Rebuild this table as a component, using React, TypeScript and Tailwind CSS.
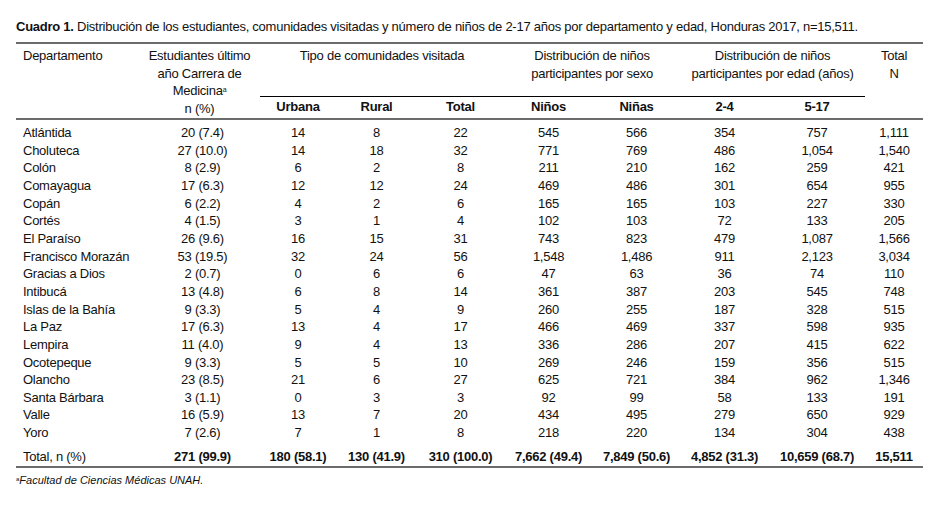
import React from 'react';

type Row = [string, string, string, string, string, string, string, string, string, string];

const rows: Row[] = [
  ['Atlántida', '20 (7.4)', '14', '8', '22', '545', '566', '354', '757', '1,111'],
  ['Choluteca', '27 (10.0)', '14', '18', '32', '771', '769', '486', '1,054', '1,540'],
  ['Colón', '8 (2.9)', '6', '2', '8', '211', '210', '162', '259', '421'],
  ['Comayagua', '17 (6.3)', '12', '12', '24', '469', '486', '301', '654', '955'],
  ['Copán', '6 (2.2)', '4', '2', '6', '165', '165', '103', '227', '330'],
  ['Cortés', '4 (1.5)', '3', '1', '4', '102', '103', '72', '133', '205'],
  ['El Paraíso', '26 (9.6)', '16', '15', '31', '743', '823', '479', '1,087', '1,566'],
  ['Francisco Morazán', '53 (19.5)', '32', '24', '56', '1,548', '1,486', '911', '2,123', '3,034'],
  ['Gracias a Dios', '2 (0.7)', '0', '6', '6', '47', '63', '36', '74', '110'],
  ['Intibucá', '13 (4.8)', '6', '8', '14', '361', '387', '203', '545', '748'],
  ['Islas de la Bahía', '9 (3.3)', '5', '4', '9', '260', '255', '187', '328', '515'],
  ['La Paz', '17 (6.3)', '13', '4', '17', '466', '469', '337', '598', '935'],
  ['Lempira', '11 (4.0)', '9', '4', '13', '336', '286', '207', '415', '622'],
  ['Ocotepeque', '9 (3.3)', '5', '5', '10', '269', '246', '159', '356', '515'],
  ['Olancho', '23 (8.5)', '21', '6', '27', '625', '721', '384', '962', '1,346'],
  ['Santa Bárbara', '3 (1.1)', '0', '3', '3', '92', '99', '58', '133', '191'],
  ['Valle', '16 (5.9)', '13', '7', '20', '434', '495', '279', '650', '929'],
  ['Yoro', '7 (2.6)', '7', '1', '8', '218', '220', '134', '304', '438'],
];

const totals: Row = ['Total, n (%)', '271 (99.9)', '180 (58.1)', '130 (41.9)', '310 (100.0)', '7,662 (49.4)', '7,849 (50.6)', '4,852 (31.3)', '10,659 (68.7)', '15,511'];

const App: React.FC = () => {
  return (
    <div className="w-[944px] h-[506px] bg-white text-[#111] font-['Liberation_Sans','Arial',sans-serif] text-[13px] tracking-[-0.25px]">
      <div className="pl-[16px] pr-[21px] pt-[20px]">
        {/* Caption */}
        <p className="leading-[14px] h-[22px] whitespace-nowrap">
          <span className="font-bold">Cuadro 1.</span> Distribución de los estudiantes, comunidades visitadas y número de niños de 2-17 años por departamento y edad, Honduras 2017, n=15,511.
        </p>

        <table className="w-[907px] table-fixed border-collapse leading-[17.65px]">
          <colgroup>
            <col className="w-[129px]" />
            <col className="w-[115px]" />
            <col className="w-[76px]" />
            <col className="w-[81px]" />
            <col className="w-[87px]" />
            <col className="w-[89px]" />
            <col className="w-[87px]" />
            <col className="w-[89px]" />
            <col className="w-[96px]" />
            <col className="w-[58px]" />
          </colgroup>
          <thead className="border-t-2 border-b-2 border-[#6b6b6b]">
            <tr className="h-[53px]">
              <th rowSpan={2} className="align-top text-left font-normal pl-[7px] pt-[3px] whitespace-nowrap">Departamento</th>
              <th rowSpan={2} className="align-top font-normal pt-[3px] pr-[6px] whitespace-nowrap">
                Estudiantes último<br />año Carrera de<br />Medicina<sup className="text-[7px]">a</sup><br />n (%)
              </th>
              <th colSpan={3} className="align-top font-normal pt-[3px] border-b border-black whitespace-nowrap">Tipo de comunidades visitada</th>
              <th colSpan={2} className="align-top font-normal pt-[3px] border-b border-black whitespace-nowrap">Distribución de niños<br />participantes por sexo</th>
              <th colSpan={2} className="align-top font-normal pt-[3px] border-b border-black whitespace-nowrap">Distribución de niños<br />participantes por edad (años)</th>
              <th rowSpan={2} className="align-top font-normal pt-[3px] whitespace-nowrap">Total<br />N</th>
            </tr>
            <tr className="h-[23px]">
              <th className="font-bold">Urbana</th>
              <th className="font-bold">Rural</th>
              <th className="font-bold">Total</th>
              <th className="font-bold">Niños</th>
              <th className="font-bold">Niñas</th>
              <th className="font-bold">2-4</th>
              <th className="font-bold">5-17</th>
            </tr>
          </thead>
          <tbody>
            {rows.map((r, i) => (
              <tr key={r[0]} className={i === 0 ? 'h-[22.65px] align-bottom' : 'h-[17.65px]'}>
                {r.map((c, j) => (
                  <td key={j} className={j === 0 ? 'text-left pl-[7px] whitespace-nowrap' : 'text-center whitespace-nowrap'}>
                    {c}
                  </td>
                ))}
              </tr>
            ))}
            <tr className="h-[25px] border-b-2 border-[#6b6b6b] align-top">
              {totals.map((c, j) => (
                <td key={j} className={j === 0 ? 'text-left pl-[7px] pt-[6px] whitespace-nowrap' : 'text-center font-bold pt-[6px] whitespace-nowrap'}>
                  {c}
                </td>
              ))}
            </tr>
          </tbody>
        </table>

        {/* Footnote */}
        <p className="mt-[5px] text-[11px] italic leading-[14px] tracking-normal">
          <sup className="text-[6px] not-italic">a</sup>Facultad de Ciencias Médicas UNAH.
        </p>
      </div>
    </div>
  );
};

export default App;
